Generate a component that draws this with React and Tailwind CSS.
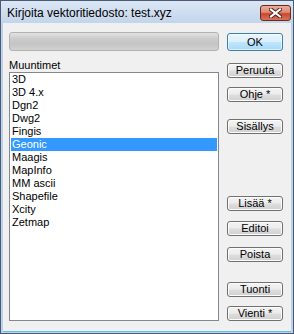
import React from "react";

const items = ["3D", "3D 4.x", "Dgn2", "Dwg2", "Fingis", "Geonic", "Maagis", "MapInfo", "MM ascii", "Shapefile", "Xcity", "Zetmap"];

function Btn({ label, className = "" }) {
  return (
    <div className={`h-[15px] w-[56px] flex items-center justify-center rounded-[3px] border border-[#707070] bg-[linear-gradient(to_bottom,#f3f3f3_0%,#ececec_48%,#dedede_52%,#d0d0d0_100%)] shadow-[inset_0_0_0_1px_#fcfcfc] text-[11px] leading-[13px] text-black ${className}`}>
      {label}
    </div>
  );
}

export default function App() {
  return (
    <div className="w-[294px] h-[334px] flex flex-col border border-[#4a5a70] bg-[#bcd2ea] font-['Liberation_Sans',Arial,sans-serif]">
      {/* otsikkopalkki */}
      <div className="h-[22px] flex items-center justify-between pl-[6px] pr-[2px] bg-linear-to-b from-[#dbe7f5] to-[#c3d5eb]">
        <span className="text-[12px] text-black leading-[14px] pt-[1px]">Kirjoita vektoritiedosto: test.xyz</span>
        <div className="mt-[2px] w-[31px] h-[16px] flex items-center justify-center rounded-[3px] border border-[#6b2a20] bg-[linear-gradient(to_bottom,#ecab9b_0%,#dc8a74_45%,#c8482e_55%,#d8735c_100%)]">
          <svg width="13" height="10" viewBox="0 0 13 10">
            <path d="M2 1.5 L11 8.5 M11 1.5 L2 8.5" stroke="#4a1a12" strokeWidth="4" strokeLinecap="square" />
            <path d="M2 1.5 L11 8.5 M11 1.5 L2 8.5" stroke="#ffffff" strokeWidth="2.2" strokeLinecap="square" />
          </svg>
        </div>
      </div>

      {/* asiakasalue */}
      <div className="flex-1 mx-[2px] mb-[2px] bg-[#f0f0f0] flex pl-[6px] pr-[8px] shadow-[0_1px_0_#5cc0ec]">
        <div className="w-[210px] flex flex-col">
          <div className="mt-[9px] h-[19px] rounded-[3px] border border-[#b2b2b2] bg-[linear-gradient(to_bottom,#e2e2e2_0%,#cbcbcb_35%,#c4c4c4_65%,#d2d2d2_100%)]" />
          <div className="mt-[8px] h-[13px] text-[11px] leading-[13px] text-black">Muuntimet</div>
          <div className="h-[249px] border border-[#828790] bg-white pt-[0px]">
            {items.map((it) => (
              <div
                key={it}
                className={`h-[13px] mx-[1px] px-[1px] text-[11px] leading-[13px] ${it === "Geonic" ? "bg-[#3399ff] text-white" : "text-black"}`}
              >
                {it}
              </div>
            ))}
          </div>
        </div>

        <div className="ml-[8px] w-[56px] flex flex-col">
          <div className="mt-[10px] h-[18px] w-[56px] flex items-center justify-center rounded-[3px] border border-[#3c7fb1] bg-[linear-gradient(to_bottom,#eaf6fd_0%,#d9f0fc_48%,#bee6fd_52%,#a7d9f5_100%)] shadow-[inset_0_0_0_1px_#ffffff99] text-[11px] text-black">
            OK
          </div>
          <Btn label="Peruuta" className="mt-[12px]" />
          <Btn label="Ohje *" className="mt-[9px]" />
          <Btn label="Sisällys" className="mt-[17px]" />
          <Btn label="Lisää *" className="mt-[62px]" />
          <Btn label="Editoi" className="mt-[10px]" />
          <Btn label="Poista" className="mt-[11px]" />
          <Btn label="Tuonti" className="mt-[20px]" />
          <Btn label="Vienti *" className="mt-[9px]" />
        </div>
      </div>
    </div>
  );
}
